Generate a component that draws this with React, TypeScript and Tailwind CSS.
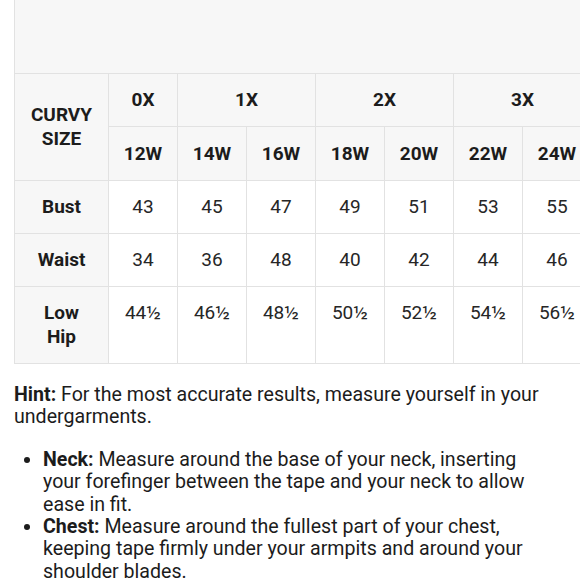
import React from "react";

const subs = ["12W", "14W", "16W", "18W", "20W", "22W", "24W"];
const rows: { label: React.ReactNode; vals: string[]; tall?: boolean }[] = [
  { label: "Bust", vals: ["43", "45", "47", "49", "51", "53", "55"] },
  { label: "Waist", vals: ["34", "36", "48", "40", "42", "44", "46"] },
  {
    label: (
      <>
        Low
        <br />
        Hip
      </>
    ),
    vals: ["44½", "46½", "48½", "50½", "52½", "54½", "56½"],
    tall: true,
  },
];

export default function App() {
  const th = "border border-[#e2e2e2] bg-[#f7f7f7] font-bold text-center align-middle p-0";
  return (
    <div
      className="w-[580px] h-[580px] overflow-hidden bg-white text-[#1c1c1c]"
      style={{ fontFamily: "Roboto, 'Liberation Sans', sans-serif" }}
    >
      <div className="pl-[14px]">
        <div className="w-[578px] h-[74px] bg-[#f7f7f7] border-l border-[#e2e2e2]" />
        <table className="table-fixed border-collapse w-[578px] text-[19px] leading-[24px] -mt-px">
          <colgroup>
            <col className="w-[94px]" />
            {subs.map((s) => (
              <col key={s} className="w-[69px]" />
            ))}
          </colgroup>
          <thead>
            <tr className="h-[53px]">
              <th rowSpan={2} className={th}>
                CURVY
                <br />
                SIZE
              </th>
              <th className={th}>0X</th>
              <th colSpan={2} className={th}>1X</th>
              <th colSpan={2} className={th}>2X</th>
              <th colSpan={2} className={th}>3X</th>
            </tr>
            <tr className="h-[54px]">
              {subs.map((s) => (
                <th key={s} className={th}>
                  {s}
                </th>
              ))}
            </tr>
          </thead>
          <tbody>
            {rows.map((r, i) => (
              <tr key={i} className={r.tall ? "h-[77px]" : "h-[53px]"}>
                <th className="border border-[#e2e2e2] bg-[#f7f7f7] font-bold text-center align-middle py-[14px] px-0">
                  {r.label}
                </th>
                {r.vals.map((v, j) => (
                  <td
                    key={j}
                    className={`border border-[#e2e2e2] bg-white text-center text-[#262626] px-0 ${
                      r.tall ? "align-top pt-[14px]" : "align-middle"
                    }`}
                  >
                    {v}
                  </td>
                ))}
              </tr>
            ))}
          </tbody>
        </table>
        <p className="mt-[20px] text-[19.6px] leading-[22.4px] pr-[20px]">
          <b>Hint:</b> For the most accurate results, measure yourself in your undergarments.
        </p>
        <ul className="mt-[20px] list-disc pl-[29px] text-[19.6px] leading-[22.4px] pr-[30px]">
          <li>
            <b>Neck:</b> Measure around the base of your neck, inserting your forefinger between the tape and your neck to allow ease in fit.
          </li>
          <li>
            <b>Chest:</b> Measure around the fullest part of your chest, keeping tape firmly under your armpits and around your shoulder blades.
          </li>
        </ul>
      </div>
    </div>
  );
}
